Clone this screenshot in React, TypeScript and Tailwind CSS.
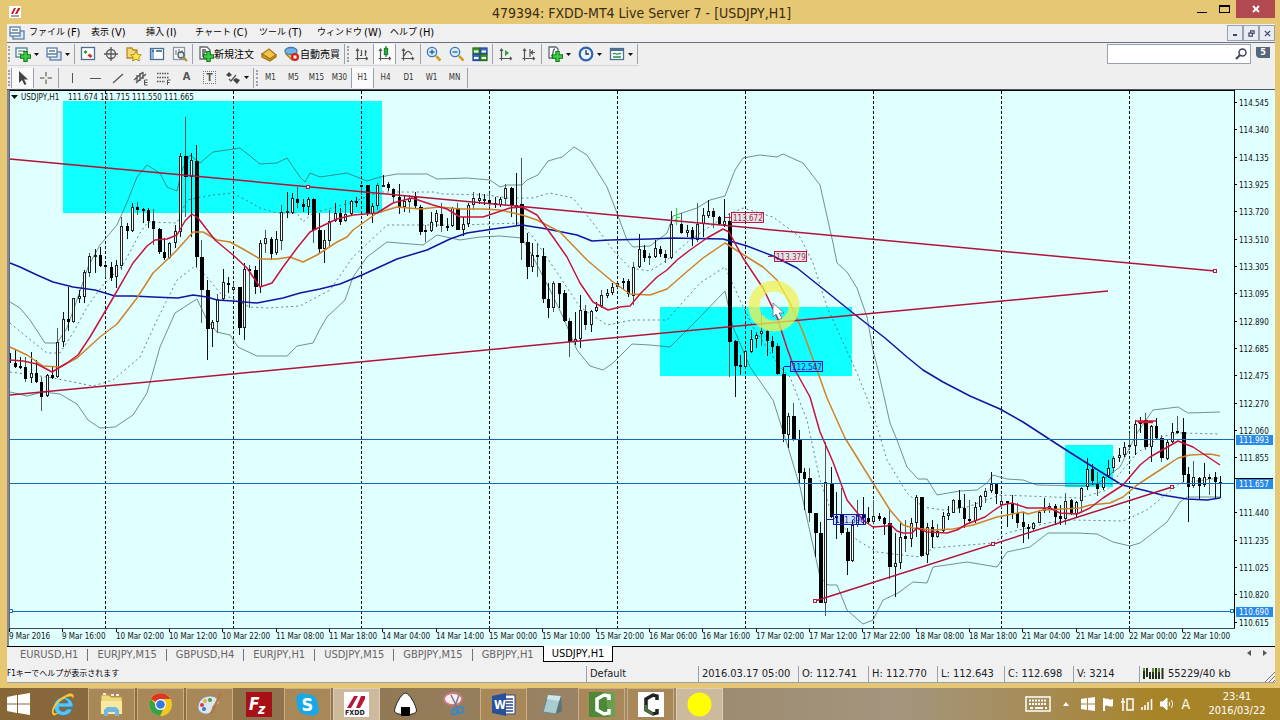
import React from 'react';
import clsx from 'clsx';

type Candle = [high: number, top: number, bottom: number, low: number, up: 0 | 1];

const UI_FONT = "font-['DejaVu_Sans_Condensed','DejaVu_Sans','Noto_Sans_CJK_JP',sans-serif]";

const CANDLES: Candle[] = [
  [347, 353, 363, 365, 0], [350, 363, 367, 368, 0], [357, 366, 368, 369, 0], [357, 367, 379, 382, 0],
  [352, 373, 378, 383, 1], [360, 373, 382, 383, 0], [377, 382, 397, 411, 0], [374, 375, 396, 397, 1],
  [367, 375, 378, 379, 0], [328, 342, 377, 378, 1], [312, 319, 342, 347, 1], [287, 319, 322, 331, 0],
  [298, 298, 322, 323, 1], [290, 296, 299, 303, 1], [270, 272, 297, 303, 1], [253, 256, 273, 277, 1],
  [249, 255, 257, 273, 1], [247, 255, 266, 267, 0], [263, 265, 267, 277, 0], [262, 267, 278, 281, 0],
  [260, 265, 277, 288, 1], [217, 226, 266, 270, 1], [223, 226, 231, 239, 0], [203, 207, 231, 232, 1],
  [202, 207, 210, 215, 0], [208, 209, 211, 223, 0], [208, 210, 221, 228, 0], [209, 221, 229, 245, 0],
  [228, 229, 252, 254, 0], [238, 252, 258, 260, 0], [242, 243, 258, 259, 1], [225, 231, 243, 248, 1],
  [153, 156, 232, 237, 1], [117, 156, 177, 217, 0], [153, 160, 177, 237, 1], [145, 161, 257, 267, 0],
  [240, 257, 290, 323, 0], [280, 290, 329, 360, 0], [320, 322, 329, 347, 1], [294, 299, 322, 333, 1],
  [269, 282, 299, 300, 1], [277, 283, 285, 293, 0], [283, 287, 290, 293, 1], [287, 287, 328, 335, 0],
  [263, 269, 328, 340, 1], [265, 269, 271, 308, 0], [266, 270, 287, 294, 0], [240, 243, 287, 293, 1],
  [230, 238, 244, 253, 1], [237, 239, 254, 260, 0], [231, 239, 253, 255, 1], [205, 212, 241, 250, 1],
  [192, 211, 213, 218, 1], [193, 198, 213, 214, 1], [187, 199, 203, 208, 0], [199, 204, 207, 212, 0],
  [197, 199, 207, 215, 1], [198, 199, 230, 243, 0], [213, 230, 249, 253, 0], [230, 240, 249, 263, 1],
  [210, 221, 241, 247, 1], [203, 213, 221, 222, 1], [208, 213, 222, 225, 0], [200, 214, 221, 222, 1],
  [200, 201, 214, 215, 1], [197, 201, 203, 207, 0], [185, 185, 187, 195, 0], [185, 185, 214, 216, 0],
  [203, 206, 214, 223, 1], [183, 185, 206, 210, 1], [175, 185, 186, 187, 1], [182, 184, 188, 191, 0],
  [188, 189, 197, 202, 0], [184, 197, 208, 214, 0], [195, 201, 207, 212, 1], [195, 198, 202, 213, 1],
  [192, 196, 206, 208, 0], [205, 207, 232, 235, 0], [225, 230, 232, 242, 0], [212, 222, 231, 232, 1],
  [210, 213, 222, 227, 1], [203, 214, 226, 232, 0], [218, 226, 228, 231, 0], [207, 208, 226, 227, 1],
  [203, 208, 230, 230, 0], [217, 224, 230, 236, 1], [203, 205, 224, 227, 1], [192, 198, 205, 210, 1],
  [193, 198, 201, 204, 1], [194, 199, 201, 205, 1], [193, 200, 204, 207, 0], [197, 203, 205, 208, 1],
  [197, 199, 205, 207, 1], [184, 188, 199, 205, 1], [187, 188, 206, 217, 0], [173, 205, 208, 225, 1],
  [158, 204, 243, 260, 0], [233, 242, 267, 279, 0], [243, 255, 267, 272, 1], [243, 255, 256, 277, 0],
  [248, 256, 299, 303, 0], [283, 299, 308, 318, 0], [281, 283, 308, 312, 1], [283, 283, 294, 308, 0],
  [290, 293, 321, 322, 0], [318, 321, 342, 357, 0], [312, 339, 342, 345, 1], [295, 310, 339, 348, 1],
  [305, 311, 325, 330, 0], [310, 311, 325, 332, 1], [302, 307, 311, 312, 1], [290, 295, 306, 308, 1],
  [289, 293, 296, 298, 1], [283, 287, 293, 295, 1], [282, 283, 287, 288, 1], [278, 281, 283, 290, 0],
  [279, 281, 294, 297, 0], [262, 267, 296, 305, 1], [234, 249, 267, 268, 1], [245, 250, 258, 262, 0],
  [253, 256, 258, 265, 1], [240, 248, 257, 258, 1], [246, 249, 254, 257, 0], [250, 254, 258, 263, 0],
  [211, 224, 258, 259, 1], [208, 222, 224, 225, 1], [213, 224, 233, 234, 0], [225, 230, 233, 237, 1],
  [227, 230, 239, 246, 0], [203, 224, 240, 242, 1], [208, 215, 224, 237, 1], [200, 211, 216, 218, 1],
  [208, 211, 217, 228, 0], [216, 217, 224, 225, 0], [199, 221, 225, 227, 1], [213, 221, 342, 377, 0],
  [340, 341, 366, 397, 0], [355, 365, 367, 375, 0], [350, 351, 367, 369, 1], [330, 339, 352, 353, 1],
  [333, 335, 339, 348, 1], [313, 331, 334, 346, 1], [330, 331, 341, 356, 0], [336, 341, 347, 353, 0],
  [343, 346, 374, 375, 0], [367, 374, 434, 442, 0], [413, 416, 435, 448, 1], [403, 416, 440, 441, 0],
  [430, 439, 473, 483, 0], [468, 472, 479, 510, 0], [468, 478, 513, 522, 0], [513, 513, 533, 557, 0],
  [522, 533, 603, 603, 0], [442, 482, 603, 616, 1], [467, 483, 517, 518, 0], [492, 516, 518, 539, 0],
  [488, 515, 533, 535, 0], [528, 532, 561, 575, 0], [520, 525, 561, 562, 1], [500, 515, 525, 527, 1],
  [497, 515, 518, 525, 0], [507, 518, 522, 524, 0], [500, 516, 522, 523, 1], [513, 516, 519, 521, 0],
  [517, 518, 524, 535, 0], [510, 523, 567, 579, 0], [533, 563, 567, 597, 1], [523, 537, 563, 569, 1],
  [520, 536, 539, 552, 0], [518, 523, 539, 547, 1], [495, 497, 523, 537, 1], [497, 497, 556, 557, 0],
  [523, 527, 555, 563, 1], [520, 527, 537, 548, 0], [524, 531, 537, 538, 1], [512, 516, 531, 532, 1],
  [506, 513, 516, 520, 1], [499, 500, 513, 513, 1], [490, 500, 508, 513, 0], [494, 508, 519, 528, 0],
  [500, 519, 521, 523, 0], [502, 507, 521, 523, 1], [495, 496, 507, 510, 1], [488, 491, 497, 503, 1],
  [472, 484, 491, 493, 1], [483, 484, 494, 504, 0], [495, 501, 505, 508, 1], [501, 501, 503, 527, 0],
  [495, 503, 513, 519, 0], [503, 513, 523, 528, 0], [513, 522, 527, 543, 0], [524, 527, 529, 539, 0],
  [522, 523, 529, 531, 1], [510, 512, 523, 523, 1], [498, 508, 511, 513, 1], [503, 506, 509, 513, 1],
  [504, 506, 517, 525, 0], [505, 516, 519, 525, 0], [493, 501, 519, 525, 1], [499, 500, 514, 515, 0],
  [501, 502, 514, 518, 1], [487, 488, 501, 513, 1], [458, 469, 487, 490, 1], [464, 469, 481, 485, 0],
  [472, 483, 489, 496, 0], [476, 477, 488, 490, 1], [460, 468, 476, 478, 1], [456, 458, 468, 473, 1],
  [448, 455, 458, 462, 1], [442, 447, 455, 457, 1], [433, 445, 447, 450, 1], [420, 424, 446, 455, 1],
  [417, 422, 424, 433, 0], [413, 420, 447, 450, 0], [425, 426, 447, 462, 1], [418, 426, 438, 440, 0],
  [435, 438, 458, 462, 0], [440, 442, 459, 460, 1], [423, 432, 442, 443, 1], [416, 431, 433, 434, 0],
  [418, 432, 475, 482, 0], [467, 474, 487, 522, 0], [461, 477, 486, 488, 1], [477, 478, 486, 499, 0],
  [463, 477, 485, 487, 1], [474, 477, 478, 495, 0], [472, 477, 482, 498, 0], [476, 482, 483, 498, 0],
];

// the bar drawn in green instead of black
const MARKED_CANDLE = 125;

const MA_SLOW =
  '10,263 20,267 37,275 53,282 73,287 95,290 115,296 133,296 153,297 178,298 193,295 207,297 217,300 233,301 257,303 283,298 300,293 320,289 340,284 362,275 397,259 427,250 450,239 467,233 493,229 522,225 547,229 577,235 592,241 610,240 650,239 673,238 723,239 747,246 773,256 797,268 827,292 853,313 885,338 907,357 923,370 943,382 970,396 1000,409 1023,422 1063,448 1093,467 1122,485 1147,491 1162,495 1187,499 1207,500 1220,498';
const MA_FAST =
  '10,360 23,361 37,364 52,372 67,363 78,355 90,337 113,298 133,263 147,246 155,240 167,239 177,235 185,221 192,214 198,218 215,240 233,255 247,268 260,287 272,283 283,267 297,248 310,232 320,227 337,219 353,215 377,213 393,203 412,198 433,205 447,209 460,217 483,217 510,208 522,207 537,215 553,237 567,257 580,283 593,302 608,310 620,307 630,306 640,294 657,277 667,270 677,260 690,250 707,238 723,229 729,232 743,258 763,288 777,317 787,348 795,370 810,397 820,432 833,462 847,500 863,520 873,527 887,526 890,524 897,531 903,533 912,533 917,528 927,532 947,533 957,530 967,524 985,517 993,511 1002,505 1012,503 1027,508 1050,508 1060,513 1077,514 1090,508 1103,498 1123,485 1140,465 1150,457 1178,441 1193,447 1220,465';
const MA_MID =
  '10,347 27,355 43,366 60,367 77,358 100,337 117,324 137,298 153,273 170,257 177,250 193,232 203,232 217,240 230,242 243,249 260,259 277,259 290,257 303,262 317,255 337,242 347,237 353,230 377,213 397,207 420,209 440,207 460,209 483,209 500,210 522,215 537,220 560,232 587,260 613,282 630,294 650,295 667,289 683,275 703,258 725,243 747,257 763,267 777,280 790,303 803,332 817,370 827,398 845,438 873,483 890,510 903,525 913,528 933,530 953,529 973,525 997,517 1023,512 1028,514 1043,510 1080,508 1090,505 1110,503 1123,497 1137,485 1160,470 1178,458 1190,455 1210,454 1220,456';
const BAND_UPPER =
  '10,302 20,308 30,320 45,343 57,343 67,328 78,297 88,267 100,245 117,225 128,200 137,177 147,165 160,173 167,187 177,191 182,170 190,155 200,163 213,152 240,148 260,164 277,163 287,158 300,177 305,182 310,173 320,177 347,173 367,181 380,177 397,174 427,174 437,179 467,178 490,180 500,187 507,185 522,185 527,180 538,175 548,161 562,157 574,147 587,155 607,187 617,213 627,240 633,247 650,246 667,233 673,216 697,208 710,200 725,196 735,170 743,158 760,155 777,157 783,154 803,163 820,185 833,243 837,263 847,272 857,288 867,317 873,350 878,370 890,423 897,440 907,467 918,479 927,479 937,495 960,491 977,490 987,483 993,475 1007,479 1023,480 1037,485 1083,486 1097,484 1120,467 1137,433 1153,410 1178,407 1188,413 1220,412';
const BAND_LOWER =
  '10,392 27,396 43,392 60,394 77,404 88,420 100,428 115,427 133,415 147,393 160,347 175,313 197,299 207,320 217,332 230,335 238,347 257,356 287,356 297,346 313,343 320,329 327,317 345,300 353,277 367,257 387,242 423,245 437,235 460,240 480,237 500,236 522,238 533,257 550,290 563,317 577,350 590,366 603,370 613,363 632,344 650,345 670,347 700,317 725,291 733,327 750,367 773,400 788,447 800,487 820,577 828,585 837,585 847,610 863,624 873,620 883,600 898,593 913,582 927,583 933,567 967,562 997,567 1007,552 1030,547 1048,533 1077,533 1097,534 1113,542 1130,546 1140,543 1153,533 1167,522 1180,502 1187,497 1220,497';
const INNER_UPPER =
  '10,323 27,337 47,353 60,353 73,333 87,307 103,285 123,265 140,233 148,222 177,223 187,200 213,195 233,193 260,208 277,213 297,213 303,222 313,213 350,203 380,192 433,192 443,194 487,195 507,198 533,198 550,193 573,198 593,223 613,250 630,268 650,271 667,260 690,240 727,215 743,208 773,217 800,237 813,263 827,307 857,373 873,413 887,460 907,493 923,507 943,510 967,507 1000,495 1080,498 1107,490 1120,473 1137,453 1160,437 1180,433 1220,434';
const INNER_LOWER =
  '10,372 33,375 53,378 93,386 113,380 140,357 157,320 177,280 195,266 207,277 220,293 250,307 267,308 300,306 330,290 353,257 387,225 460,225 520,223 533,237 560,277 580,307 607,325 633,320 667,320 700,283 725,267 740,300 753,327 780,367 790,377 807,420 820,480 833,517 857,540 877,552 920,557 933,548 993,543 1007,533 1047,523 1070,520 1123,521 1147,510 1180,483 1220,478';

const PRICES: [string, number][] = [
  ['114.545', 102], ['114.340', 129], ['114.135', 157], ['113.925', 184], ['113.720', 211],
  ['113.510', 239], ['113.305', 266], ['113.095', 293], ['112.890', 321], ['112.685', 348],
  ['112.475', 375], ['112.270', 403], ['112.060', 430], ['111.855', 457], ['111.440', 512],
  ['111.235', 540], ['111.025', 567], ['110.820', 594], ['110.615', 622],
];

const LEVELS: [string, number][] = [['111.993', 439], ['111.657', 483], ['110.690', 611]];

const TIMES = [
  '9 Mar 2016', '9 Mar 16:00', '10 Mar 02:00', '10 Mar 12:00', '10 Mar 22:00', '11 Mar 08:00',
  '11 Mar 18:00', '14 Mar 04:00', '14 Mar 14:00', '15 Mar 00:00', '15 Mar 10:00', '15 Mar 20:00',
  '16 Mar 06:00', '16 Mar 16:00', '17 Mar 02:00', '17 Mar 12:00', '17 Mar 22:00', '18 Mar 08:00',
  '18 Mar 18:00', '21 Mar 04:00', '21 Mar 14:00', '22 Mar 00:00', '22 Mar 10:00',
];

const DAY_LINES = [105, 233, 361, 489, 617, 745, 873, 1001, 1129];

const MARKERS = [
  { text: '113.672', x: 731, y: 212, color: '#c01840' },
  { text: '113.379', x: 774, y: 251, color: '#c01840' },
  { text: '112.547', x: 790, y: 361, color: '#1818c0' },
  { text: '111.396', x: 833, y: 514, color: '#1818c0' },
];

const HANDLES = [[308, 187], [1215, 271], [815, 601], [993, 544], [1172, 487]];

const Chart: React.FC = () => (
  <svg viewBox="7 90 1268 556" className={clsx('block w-full h-auto bg-[#e0ffff]', UI_FONT)} fontSize="8">
    <g fill="#10ffff">
      <rect x="63" y="101" width="319" height="112" />
      <rect x="660" y="307" width="192" height="69" />
      <rect x="1065" y="445" width="48" height="42" />
    </g>
    <g stroke="#111" strokeDasharray="3 2" shapeRendering="crispEdges">
      {DAY_LINES.map((x) => <line key={x} x1={x + 0.5} x2={x + 0.5} y1="91" y2="628" />)}
    </g>
    <g fill="none" stroke="#2f4f4f" strokeWidth="0.7" strokeLinejoin="round">
      <polyline points={BAND_UPPER} opacity="0.9" />
      <polyline points={BAND_LOWER} opacity="0.9" />
      <g strokeDasharray="2 3">
        <polyline points={INNER_UPPER} />
        <polyline points={INNER_LOWER} />
      </g>
    </g>
    <g shapeRendering="crispEdges">
      {CANDLES.map(([high, top, bottom, low, up], i) => {
        const x = Math.round(9.3 + (i * 16) / 3);
        if (i === MARKED_CANDLE) {
          return <path key={i} d={`M${x + 0.5} ${high}V${low}M${x - 1} ${low - 6}h1M${x + 1} ${high + 9}h3`} stroke="#28e028" />;
        }
        return (
          <g key={i}>
            <rect x={x} y={high} width="1" height={low - high} fill={i % 3 ? '#111' : '#555'} />
            {up ? (
              <>
                <rect x={x - 1} y={top} width="3" height={Math.max(bottom - top, 2)} fill="#222" />
                <rect x={x} y={top + 1} width="1" height={Math.max(bottom - top - 2, 0)} fill="#fff" />
              </>
            ) : (
              <rect x={x - 1} y={top} width={bottom - top > 15 ? 4 : 3} height={Math.max(bottom - top, 2)} fill="#000" />
            )}
          </g>
        );
      })}
    </g>
    <g fill="none" strokeWidth="1.5" strokeLinejoin="round">
      <polyline points={MA_SLOW} stroke="#1414a0" />
      <polyline points={MA_MID} stroke="#d08228" />
      <polyline points={MA_FAST} stroke="#c8143c" />
      <g stroke="#b01238">
        <path d="M10 159 1215 271M10 395 1108 291M815 601 1172 487" />
        <path d="M1135 421h21M1138 422.5h15" stroke="#d01830" />
      </g>
    </g>
    <g fill="#e0ffff" stroke="#c01238">
      {HANDLES.map(([x, y]) => <rect key={x} x={x - 1.5} y={y - 1.5} width="3" height="3" />)}
    </g>
    <g stroke="#1a66b8" shapeRendering="crispEdges">
      {LEVELS.map(([price, y]) => <line key={price} x1="9" x2="1234" y1={y + 0.5} y2={y + 0.5} />)}
    </g>
    <path d="M9.5 609.5h3v3h-3zM1230.5 609.5h3v3h-3z" fill="#e0ffff" stroke="#1a66b8" />
    {MARKERS.map(({ text, x, y, color }) => (
      <g key={text}>
        <path d={`M${x - 6} ${y + 5.5}h6`} stroke={color} />
        <rect x={x + 0.5} y={y + 0.5} width="32" height="10" fill={color} fillOpacity="0.1" stroke={color} />
        <text x={x + 2} y={y + 9} fill={color}>{text}</text>
      </g>
    ))}
    <circle cx="774" cy="306" r="20" fill="none" stroke="#f0f050" strokeWidth="11" opacity="0.75" />
    <path d="M773 303v14l3-3 3 6 3-2-3-5h5z" fill="#fff" stroke="#667" strokeWidth="0.8" />

    <g stroke="#000" shapeRendering="crispEdges">
      <path d="M7 90.5H1235M1234.5 90V629" />
      <path d="M9.5 90V629" stroke="#667" />
      <path d="M7 628.5H1235" stroke="#445" />
      {TIMES.map((t, i) => {
        const x = Math.round(9 + (i * 160) / 3) + 0.5;
        return <line key={t} x1={x} x2={x} y1="629" y2="632" />;
      })}
      {PRICES.map(([p, y]) => <line key={p} x1="1235" x2="1237" y1={y + 0.5} y2={y + 0.5} />)}
    </g>
    <rect x="7" y="90" width="2" height="556" fill="#888894" />
    <g fill="#111">
      <path d="M11 95h7l-3.500 4z" />
      <text x="21" y="100">USDJPY,H1</text>
      <text x="68" y="100">111.674 111.715 111.550 111.665</text>
      {TIMES.map((t, i) => <text key={t} x={Math.round(9 + (i * 160) / 3)} y="639">{t}</text>)}
      {PRICES.map(([p, y]) => <text key={p} x="1239" y={y + 4}>{p}</text>)}
    </g>
    {LEVELS.map(([p, y]) => (
      <g key={p}>
        <rect x="1236" y={y - 4} width="37" height="10" fill="#2a8ae8" />
        <text x="1239" y={y + 4} fill="#fff">{p}</text>
      </g>
    ))}
    <path d="M1235 478.500h38" stroke="#000" />
  </svg>
);

const Icon: React.FC<{ children: React.ReactNode }> = ({ children }) => (
  <svg viewBox="0 0 16 16" className="w-4 h-4 shrink-0" fill="none" stroke="#555" strokeWidth="1.3">
    {children}
  </svg>
);

const PLUS = (
  <>
    <path d="M10.500 5v11M5 10.500h11" stroke="#107818" strokeWidth="4.400" />
    <path d="M10.500 6v9M6 10.500h9" stroke="#38d040" strokeWidth="2.400" />
  </>
);
const AXES = <path d="M3.500 3v11.500M1.500 12.500H14M2 5l1.500-2L5 5M12 11l1.500 1.500L12 14" strokeWidth="1.200" />;

const ICONS: Record<string, React.ReactNode> = {
  newChart: <><rect x="1" y="2" width="11" height="9" fill="#fff" stroke="#4a7a9a" /><path d="M3 5h7M3 8h4" stroke="#7a9" />{PLUS}</>,
  profiles: <><rect x="4" y="6" width="11" height="8" fill="#dde8f2" stroke="#5b7fa5" /><rect x="1" y="2" width="10" height="9" fill="#fff" stroke="#5b7fa5" /><path d="M1 8h10M3 5h6" stroke="#5b7fa5" /></>,
  market: <><rect x="1.500" y="1.500" width="13" height="12" fill="#fff" stroke="#4a6f95" /><path d="M3.500 6l2-2 2 2-2 2z" fill="#20a030" stroke="none" /><path d="M7.500 9.500l2-2 3 2.500-2 2z" fill="#d03030" stroke="none" /></>,
  crosshairs: <><circle cx="8" cy="8" r="4.500" /><path d="M8 1v14M1 8h14" /></>,
  navigator: <><path d="M1 2h5l1 2h4v8H1z" fill="#f5d778" stroke="#b48c28" /><path d="M10 5l1.700 3.400 3.700.5-2.700 2.500.7 3.600-3.400-1.800L6.600 15l.7-3.600L4.600 8.900l3.700-.5z" fill="#ffe840" stroke="#b48c28" strokeWidth="1" /></>,
  terminal: <><rect x="1.500" y="2.500" width="13" height="11" fill="#fff" stroke="#4a6f95" /><rect x="2" y="3" width="3" height="10" fill="#8fb4dc" stroke="none" /><path d="M3 5h2M7 5h6" stroke="#357" /></>,
  tester: <><rect x="1.500" y="1.500" width="11" height="12" fill="#fff" stroke="#8899a5" /><path d="M4 4v5M7 3v4M10 4v4" stroke="#789" /><circle cx="9" cy="9" r="3" fill="#d7ecfb" /><path d="M11 11l4 4" stroke="#a98a30" strokeWidth="2" /></>,
  order: <><path d="M2 1h7l3 3v9H2z" fill="#fff" stroke="#667" /><path d="M4 4h4M4 6h5M4 8h3M4 10h2" />{PLUS}</>,
  editor: <><path d="M1 8l7-5 7 6-6 4z" fill="#f2c44c" stroke="#a87a14" /><path d="M1 8v3l8 4 6-4V9l-6 4z" fill="#d89c24" stroke="#a87a14" /></>,
  autoTrade: <><path d="M2 8l6 6 5-4-2-5z" fill="#f2c44c" stroke="#a87a14" /><ellipse cx="7" cy="5" rx="6" ry="3.500" fill="#72b4e4" stroke="#3a7ab0" /><circle cx="11" cy="11" r="4" fill="#d42020" stroke="none" /><rect x="9.500" y="9.500" width="3" height="3" fill="#fff" stroke="none" /></>,
  bars: <>{AXES}<path d="M7.500 4v6M6 9.500h1.500M11.500 4v6M11.500 6H13" strokeWidth="1.200" /></>,
  candles: <>{AXES}<path d="M9 0v11" stroke="#18842c" /><rect x="7.500" y="2.500" width="3" height="6" fill="#30b848" stroke="#18842c" /></>,
  line: <>{AXES}<path d="M4 10c3-6 5-6 8-1" strokeWidth="1.200" /></>,
  zoomIn: <><circle cx="6" cy="6" r="4.700" fill="#d7ecfb" stroke="#3b78b8" /><path d="M3.500 6h5M6 3.500v5" stroke="#2b5f9e" /><path d="M10 10l4.500 4.500" stroke="#d0a020" strokeWidth="2.500" /></>,
  zoomOut: <><circle cx="6" cy="6" r="4.700" fill="#d7ecfb" stroke="#3b78b8" /><path d="M3.500 6h5" stroke="#2b5f9e" /><path d="M10 10l4.500 4.500" stroke="#d0a020" strokeWidth="2.500" /></>,
  tile: <><rect x="1" y="2" width="6.500" height="6" fill="#3c9c30" stroke="#267020" /><rect x="8.500" y="2" width="6.500" height="6" fill="#3870c8" stroke="#264c98" /><rect x="1" y="8.500" width="6.500" height="6" fill="#3870c8" stroke="#264c98" /><rect x="8.500" y="8.500" width="6.500" height="6" fill="#3c9c30" stroke="#267020" /><path d="M2 5.500h4.500M9.500 5.500H14M2 12h4.500M9.500 12H14" stroke="#fff" strokeWidth="2" /></>,
  autoScroll: <>{AXES}<path d="M7 4l4 3-4 3z" fill="#28a040" stroke="none" /></>,
  shift: <>{AXES}<path d="M9 3v8M14 6.500h-4M12 4.500l-2 2 2 2" strokeWidth="1.200" /></>,
  indicators: <><path d="M2 1h7l2 2v9H2z" fill="#fff" stroke="#667" /><path d="M4 10c3 0 1-7 4-7" stroke="#467" />{PLUS}</>,
  clock: <><circle cx="8" cy="8" r="6.300" fill="#e8f4ff" stroke="#2c64b0" strokeWidth="2.200" /><path d="M8 4v4h3" stroke="#234" /></>,
  template: <><rect x="1.500" y="2.500" width="13" height="11" fill="#fff" stroke="#4a7090" /><path d="M2 4h12" stroke="#4a7090" strokeWidth="2" /><path d="M4 8c2-2 3 1 5 0s2-1 3 0M4 11h8" stroke="#289050" /></>,
  cursor: <path d="M4 1v12l3-3 2.500 5 2-1L9 9.500h4z" fill="#444" stroke="none" />,
  cross: <path d="M8 2v4.500M8 9.500V14M2 8h4.500M9.500 8H14" stroke="#444" strokeWidth="1" />,
  vline: <path d="M8.500 3v10" strokeWidth="1" />,
  hline: <path d="M3 8.500h11" strokeWidth="1" />,
  trend: <path d="M3 13L13 4" strokeWidth="1.200" />,
  channel: <><path d="M1 10l9-8M3 13l10-9M4 5v7M7 3v8M10 2v7" /><path d="M14.500 10h-3v5h3M11.500 12.500h3" strokeWidth="1" /></>,
  fibo: <><path d="M1 3.500h12M1 7.500h12M1 11.500h8" strokeDasharray="1.500 1" /><path d="M11.500 15v-5h3M11.500 12.500h2" strokeWidth="1" /></>,
  arrows: <><path d="M1 5l3-3 3 3-3 2zM8 10l3-2 4 2-3 4z" fill="#444" stroke="none" /><path d="M4 9l2 2 5-6" /></>,
};

const ToolButton: React.FC<{ icon: string; label: string; pressed?: boolean; drop?: boolean; text?: string }> = ({
  icon, label, pressed, drop, text,
}) => (
  <button
    aria-label={label}
    className={clsx(
      'h-5 pl-[3px] pr-[2px] flex items-center shrink-0 border-x text-[10px] text-black whitespace-nowrap',
      pressed ? 'bg-[#fafafa] border-gray-400' : 'border-transparent',
    )}
  >
    <Icon>{ICONS[icon]}</Icon>
    {text && <span>{text}</span>}
    {drop && <svg viewBox="0 0 5 3" className="w-[5px] h-[3px] ml-[3px]"><path d="M0 0h5L2.500 3z" fill="#111" /></svg>}
  </button>
);

const Sep: React.FC = () => <span className="w-px h-5 bg-gray-400 shrink-0 mx-px" />;
const Grip: React.FC = () => <span className="w-0 h-4 border-l-2 border-dotted border-gray-400 shrink-0 mx-px" />;

const MENUS: [string, string, string][] = [
  ['ファイル', '(F)', 'w-[62px]'], ['表示', '(V)', 'w-[55px]'], ['挿入', '(I)', 'w-[49px]'], ['チャート', '(C)', 'w-[64px]'],
  ['ツール', '(T)', 'w-[58px]'], ['ウィンドウ', '(W)', 'w-[73px]'], ['ヘルプ', '(H)', 'w-[60px]'],
];

const PERIODS = ['M1', 'M5', 'M15', 'M30', 'H1', 'H4', 'D1', 'W1', 'MN'];

const TABS = ['EURUSD,H1', 'EURJPY,M15', 'GBPUSD,H4', 'EURJPY,H1', 'USDJPY,M15', 'GBPJPY,M15', 'GBPJPY,H1', 'USDJPY,H1'];

const STATUS: [string, string][] = [
  ['Default', 'w-[112px]'], ['2016.03.17 05:00', 'w-[100px]'], ['O: 112.741', 'w-[70px]'],
  ['H: 112.770', 'w-[69px]'], ['L: 112.643', 'w-[67px]'], ['C: 112.698', 'w-[69px]'], ['V: 3214', 'w-[66px]'],
];

const TitleBar: React.FC = () => (
  <header className="h-6 flex items-start text-[#3a2c10]">
    <svg viewBox="0 0 12 12" className="w-3 h-3 mt-[6px] ml-[2px]">
      <rect width="12" height="12" fill="#fff" />
      <path d="M2 8l3-6h2L4 8zM6 8l3-6h2v1L8 8z" fill="#c01828" />
      <path d="M2 10h8" stroke="#445" />
    </svg>
    <h1 className="flex-1 pt-1 pl-[72px] text-center text-[14px] leading-[18px] whitespace-nowrap">
      479394: FXDD-MT4 Live Server 7 - [USDJPY,H1]
    </h1>
    <button aria-label="最小化" className="w-[23px] h-[18px] flex justify-center items-end pb-[5px]"><span className="w-[10px] h-px bg-black" /></button>
    <button aria-label="最大化" className="w-[23px] h-[18px] flex justify-center items-center"><span className="w-[11px] h-2 border border-t-2 border-black" /></button>
    <button aria-label="閉じる" className="w-[39px] h-[18px] bg-[#b04a50] flex justify-center items-center">
      <svg viewBox="0 0 8 8" className="w-2 h-2"><path d="M1 1l6 6M7 1L1 7" stroke="#fff" strokeWidth="1.800" /></svg>
    </button>
  </header>
);

const MenuBar: React.FC = () => (
  <nav className="h-[19px] bg-[#f0f0f0] border-b border-gray-500 flex items-center text-[9px]">
    <span className="w-[22px] pl-[2px] flex"><Icon>{ICONS.profiles}</Icon></span>
    {MENUS.map(([name, shortcut, width]) => (
      <button key={name} className={clsx('text-left whitespace-nowrap flex items-center gap-0.5', width)}>
        {name} <span className="text-[11px] leading-4">{shortcut}</span>
      </button>
    ))}
    <div className="ml-auto flex h-4">
      <button aria-label="子を最小化" className="w-4 border border-gray-400 bg-[#e8ecf4] flex justify-center items-center"><span className="w-1 h-0.5 mt-1 bg-[#446]" /></button>
      <button aria-label="元に戻す" className="w-4 border border-gray-400 bg-[#e8ecf4] flex justify-center items-center">
        <svg viewBox="0 0 8 8" className="w-[7px] h-[7px]" fill="none" stroke="#446" strokeWidth="1.300"><path d="M3 3V1h4v3H5.500M1 3.500h4V7H1z" /></svg>
      </button>
      <button aria-label="子を閉じる" className="w-4 border border-gray-400 bg-[#e8ecf4] flex justify-center items-center">
        <svg viewBox="0 0 8 8" className="w-[7px] h-[7px]"><path d="M1 1l6 6M7 1L1 7" stroke="#446" strokeWidth="1.500" /></svg>
      </button>
    </div>
  </nav>
);

const Toolbars: React.FC = () => (
  <div className="bg-[#efefef] border-b border-gray-600 flex items-start justify-between">
    <div>
      <div className="h-[23px] w-fit flex items-center border-b border-gray-300">
        <Grip />
        <ToolButton icon="newChart" label="新規チャート" drop />
        <ToolButton icon="profiles" label="プロファイル" drop />
        <Sep />
        <ToolButton icon="market" label="気配値表示" />
        <ToolButton icon="crosshairs" label="データウィンドウ" />
        <ToolButton icon="navigator" label="ナビゲーター" />
        <ToolButton icon="terminal" label="ターミナル" />
        <ToolButton icon="tester" label="ストラテジーテスター" />
        <Sep />
        <ToolButton icon="order" label="新規注文" text="新規注文" />
        <ToolButton icon="editor" label="エディター" />
        <ToolButton icon="autoTrade" label="自動売買" text="自動売買" />
        <Sep />
        <Grip />
        <ToolButton icon="bars" label="バーチャート" />
        <ToolButton icon="candles" label="ローソク足" pressed />
        <ToolButton icon="line" label="ラインチャート" />
        <Sep />
        <ToolButton icon="zoomIn" label="ズームイン" />
        <ToolButton icon="zoomOut" label="ズームアウト" />
        <ToolButton icon="tile" label="並べて表示" />
        <Sep />
        <ToolButton icon="autoScroll" label="自動スクロール" />
        <ToolButton icon="shift" label="チャートシフト" />
        <Sep />
        <ToolButton icon="indicators" label="インディケータ" drop />
        <ToolButton icon="clock" label="時間足" drop />
        <ToolButton icon="template" label="テンプレート" drop />
        <Sep />
      </div>
      <div className="h-[23px] w-fit flex items-center">
        <Grip />
        <ToolButton icon="cursor" label="カーソル" pressed />
        <ToolButton icon="cross" label="十字カーソル" />
        <Sep />
        <ToolButton icon="vline" label="垂直線" />
        <ToolButton icon="hline" label="水平線" />
        <ToolButton icon="trend" label="トレンドライン" />
        <ToolButton icon="channel" label="チャネル" />
        <ToolButton icon="fibo" label="フィボナッチ" />
        <button className="w-[23px] text-[11px] font-bold text-[#555]">A</button>
        <button className="w-[23px] flex justify-center"><span className="w-[13px] h-[13px] border border-dotted border-gray-500 text-[10px] leading-[11px] font-bold text-[#555]">T</span></button>
        <ToolButton icon="arrows" label="矢印" drop />
        <Sep />
        <Grip />
        {PERIODS.map((p) => (
          <button
            key={p}
            className={clsx(
              'w-[23px] h-5 text-[8px] text-[#333] border-x',
              p === 'H1' ? 'bg-[#fafafa] border-gray-400' : 'border-transparent',
            )}
          >
            {p}
          </button>
        ))}
        <Sep />
      </div>
    </div>
    <div className="flex h-5 mt-px">
      <label className="w-36 bg-white border border-gray-400 flex items-center px-[3px]">
        <input aria-label="検索" className="min-w-0 flex-1 outline-none text-[10px]" />
        <svg viewBox="0 0 12 12" className="w-3 h-3" fill="none" stroke="#446">
          <circle cx="7.500" cy="4.500" r="3.500" strokeWidth="1.500" /><path d="M5 7l-4 4" strokeWidth="2.200" />
        </svg>
      </label>
      <button className="w-6 flex justify-center pt-[3px]">
        <span className="w-[14px] h-[11px] bg-[#56677c] text-white text-[9px] leading-[11px] font-bold rounded-bl-sm">5</span>
      </button>
    </div>
  </div>
);

const TabBar: React.FC = () => (
  <div className="h-[19px] bg-[#f0f0f0] border-t border-black flex items-start pl-[4px] text-[11px] text-[#666]">
    {TABS.map((tab, i) =>
      i === TABS.length - 1 ? (
        <button key={tab} className="h-4 px-2 -mt-px bg-white border border-t-0 border-black text-black leading-4">{tab}</button>
      ) : (
        <button key={tab} className={clsx('h-3 mt-0.5 px-[9px] leading-3', i < TABS.length - 2 && 'border-r border-gray-500')}>{tab}</button>
      ),
    )}
    <div className="ml-auto mr-[8px] mt-[3px] flex gap-3">
      <button aria-label="前へ"><svg viewBox="0 0 4 6" className="w-1 h-[6px]"><path d="M4 0v6L0 3z" fill="#555" /></svg></button>
      <button aria-label="次へ"><svg viewBox="0 0 4 6" className="w-1 h-[6px]"><path d="M0 0v6l4-3z" fill="#555" /></svg></button>
    </div>
  </div>
);

const StatusBar: React.FC = () => (
  <footer className="h-[18px] bg-[#f0f0f0] border-b border-gray-400 flex items-center text-[11px] text-[#222] whitespace-nowrap">
    <span className="flex-1 text-[8px] text-black">F1キーでヘルプが表示されます</span>
    {STATUS.map(([text, width]) => (
      <span key={text} className={clsx('border-l border-gray-400 pl-[3px] leading-4', width)}>{text}</span>
    ))}
    <span className="w-[136px] border-l border-gray-400 pl-[3px] leading-4 flex items-center gap-1">
      <svg viewBox="0 0 21 11" className="w-[21px] h-[11px]" strokeWidth="2">
        <path d="M1 0v11M4 0v9M7 4v7M10 2v9M13 0v11M16 1v10M19.500 0v11" stroke="#243018" />
        <path d="M1 0v3M10 0v4M16 0v4" stroke="#5c8c38" />
      </svg>
      55229/40 kb
      <svg viewBox="0 0 10 10" className="w-[10px] h-[10px] ml-auto self-end"><path d="M0 10L10 0M4 10l6-6M8 10l2-2" stroke="#777" /></svg>
    </span>
  </footer>
);

const TASKS: { name: string; open?: boolean; active?: boolean; art: React.ReactNode }[] = [
  {
    name: 'Internet Explorer',
    art: <><path d="M17 17c-2 4-8 3-8-2h14C24 3 5 2 4 14c0 12 16 12 18 3zM9 11c1-5 8-5 9 0z" fill="#58c4f4" stroke="#1878b8" strokeWidth=".6" /><path d="M3 23C-1 19 6 7 16 3c6-3 9-1 7 4 0-4-4-3-8-1C8 10 2 18 4 21c1 1 3 0 5-1-2 3-5 4-6 3z" fill="#f4c838" /></>,
  },
  {
    name: 'エクスプローラー', open: true,
    art: <><path d="M2 3h8l2 2h11v17H2z" fill="#f0d880" stroke="#b89838" /><path d="M4 2h3M12 3h3M17 3h3" stroke="#eee" strokeWidth="2" /><path d="M2 9h21v13H2z" fill="#f8e8a0" /><path d="M5 24v-6l3-3h9l3 3v6h-4v-4H9v4z" fill="#70b8e0" /></>,
  },
  {
    name: 'Google Chrome', open: true,
    art: <><circle cx="12.500" cy="12.500" r="11.500" fill="#f0c820" /><path d="M2.500 7a11.500 11.500 0 0120 0h-10l-4.500 3z" fill="#d83828" /><path d="M2.500 7a11.500 11.500 0 009.500 17l4-8.500-8-2.500z" fill="#38a048" /><circle cx="12.500" cy="12.500" r="5.500" fill="#fff" /><circle cx="12.500" cy="12.500" r="4.300" fill="#3878d8" /></>,
  },
  {
    name: 'ペイント', open: true,
    art: <><path d="M1 14C2 5 12 2 18 5c6 3 5 8 0 8-4 1-1 5-5 8S0 21 1 14z" fill="#dce6ee" stroke="#889" /><circle cx="5" cy="13" r="2" fill="#d04040" /><circle cx="8" cy="9" r="2" fill="#e8b830" /><circle cx="13" cy="8" r="2" fill="#48a048" /><circle cx="7" cy="17" r="2" fill="#3878c8" /><path d="M24 1L14 22" stroke="#b87838" strokeWidth="2.500" /></>,
  },
  {
    name: 'FileZilla',
    art: <><rect width="26" height="25" fill="#a81018" /><text x="3" y="18" fill="#fff" fontSize="17" fontWeight="bold" fontStyle="italic">F</text><text x="12" y="22" fill="#fff" fontSize="14" fontWeight="bold" fontStyle="italic">z</text></>,
  },
  {
    name: 'Skype', open: true,
    art: <><circle cx="12.500" cy="12.500" r="10.500" fill="#18a8e8" /><circle cx="7.500" cy="7.500" r="6.500" fill="#18a8e8" /><circle cx="17.500" cy="17.500" r="6.500" fill="#18a8e8" /><text x="6.500" y="19" fill="#fff" fontSize="18" fontWeight="bold">S</text></>,
  },
  {
    name: 'FXDD', active: true,
    art: <><rect width="25" height="25" fill="#fff" /><path d="M3 16l7-12h4L7 16zM12 16l5-12h4v3l-5 9z" fill="#b81838" /><text x="1" y="23" fontSize="7" fontWeight="bold" fill="#222">FXDD</text></>,
  },
  {
    name: 'おにぎり',
    art: <><path d="M12.500 1c4 0 11 13 11 18 0 5-22 5-22 0 0-5 7-18 11-18z" fill="#fff" stroke="#222" /><path d="M8 15h9v9H8z" fill="#000" /></>,
  },
  {
    name: 'Snipping Tool',
    art: <><ellipse cx="11" cy="7" rx="9" ry="6" fill="#f8f0f0" stroke="#d07888" strokeWidth="2" /><path d="M9 3l7 14M17 3l-5 14" stroke="#778" strokeWidth="1.500" /><circle cx="18.500" cy="18" r="3" fill="none" stroke="#3888c8" strokeWidth="2" /><circle cx="12.500" cy="20" r="2.500" fill="none" stroke="#3888c8" strokeWidth="2" /></>,
  },
  {
    name: 'Word', open: true,
    art: <><rect x="11" y="3" width="13" height="19" fill="#fff" stroke="#284888" /><path d="M15 7h7M15 10h7M15 13h7M15 16h7M15 19h7" stroke="#284888" strokeWidth="1.500" /><path d="M1 4l14-3v23L1 21z" fill="#28509c" /><text x="3" y="17" fill="#fff" fontSize="12" fontWeight="bold">W</text></>,
  },
  {
    name: 'メモ帳',
    art: <><path d="M8 3l13 1-5 18-13-2z" fill="#a8ccd0" stroke="#68888c" /><path d="M8 3l13 1-2 5-12-2z" fill="#d0e8e8" /><path d="M21 4l1 15-6 3z" fill="#587478" /></>,
  },
  {
    name: 'Camtasia Studio', open: true,
    art: <><rect width="26" height="25" fill="#4c8838" /><path d="M16 0h10v25h-6z" fill="#68a050" /><path d="M20 8V4l-5-1-7 4v11l7 4 5-1v-4" fill="none" stroke="#fff" strokeWidth="3.500" /></>,
  },
  {
    name: 'Camtasia Recorder', open: true,
    art: <><rect width="26" height="25" fill="#fff" /><path d="M19 8V4l-4-1-7 4v11l7 4 4-1v-4" fill="none" stroke="#222" strokeWidth="3.500" /><path d="M8 13v5l7 4" fill="none" stroke="#487838" strokeWidth="2.500" /></>,
  },
  { name: '黄色い丸', active: true, art: <circle cx="12.500" cy="12.500" r="12" fill="#ff0" /> },
];

const Taskbar: React.FC = () => (
  <div className="h-8 flex items-stretch text-white bg-linear-to-r from-[#866536] from-0% via-[#a3957e] via-70% to-[#a88428] to-90%">
    <button aria-label="スタート" className="w-[38px] flex items-center justify-center">
      <svg viewBox="0 0 24 22" className="w-6 h-[22px]" fill="#fff"><path d="M0 4l10-2v8.500H0zM11 2l12-2v10.500H11zM0 11.500h10V20L0 18zM11 11.500h12V22l-12-2z" /></svg>
    </button>
    {TASKS.map(({ name, open, active, art }) => (
      <button
        key={name}
        aria-label={name}
        className={clsx(
          'w-[47px] mx-px flex items-center justify-center border border-b-0',
          active && 'bg-[#cdb99c] border-[#e0ccb0]',
          open && 'bg-[#a88858] border-[#ccae80]',
          !open && !active && 'border-transparent',
        )}
      >
        <svg viewBox="0 0 26 25" className="w-[26px] h-[25px]">{art}</svg>
      </button>
    ))}
    <div className="ml-auto flex items-center">
      <svg viewBox="0 0 26 16" className="w-[26px] h-4 mr-3" fill="none" stroke="#fff">
        <rect x="1" y="1" width="24" height="14" strokeWidth="1.500" />
        <path d="M4 4.500h18M4 8h18" strokeWidth="2" strokeDasharray="2 1" /><path d="M5 12h3M10 12h8M20 12h2" strokeWidth="2" />
      </svg>
      <svg viewBox="0 0 6 4" className="w-[6px] h-1 mr-3"><path d="M0 4l3-4 3 4z" fill="#fff" /></svg>
      <div className="flex items-center gap-[7px]">
        <svg viewBox="0 0 14 14" className="w-[14px] h-[14px]" fill="#fff"><path d="M0 2l6-1v5.500H0zM7 1l7-1v6.500H7zM0 7.500h6V13l-6-1zM7 7.500h7V14l-7-1z" /></svg>
        <svg viewBox="0 0 12 14" className="w-3 h-[14px]" fill="#fff"><path d="M1 1h2v13H1z" /><path d="M3 2c3-2 4 2 8 0v7c-4 2-5-2-8 0z" /></svg>
        <svg viewBox="0 0 13 14" className="w-[13px] h-[14px]" fill="none" stroke="#fff" strokeWidth="1.500"><path d="M6 2h6v11H6zM2 1v4M0 5h4M2 6v8" /></svg>
        <svg viewBox="0 0 12 12" className="w-3 h-3" stroke="#fff" strokeWidth="1.600"><path d="M1 12V9M4 12V7M7 12V4M10.500 12V1" /></svg>
        <svg viewBox="0 0 14 12" className="w-[14px] h-3" fill="none" stroke="#fff"><path d="M0 4h3l4-4v12L3 8H0z" fill="#fff" /><path d="M9 4c1 1 1 3 0 4M11 2c2 2 2 6 0 8" /></svg>
        <span className="text-[14px] leading-4">A</span>
      </div>
      <time className="w-[90px] pl-1 text-[11px] leading-[14px] flex flex-col items-center">
        <span>23:41</span>
        <span>2016/03/22</span>
      </time>
    </div>
  </div>
);

const App: React.FC = () => (
  <div className={clsx('min-h-screen flex flex-col bg-[#e6c774]', UI_FONT)}>
    <main className="pl-[7px] pr-[5px] pb-[5px]">
      <TitleBar />
      <MenuBar />
      <Toolbars />
      <Chart />
      <TabBar />
      <StatusBar />
    </main>
    <Taskbar />
  </div>
);

export default App;
